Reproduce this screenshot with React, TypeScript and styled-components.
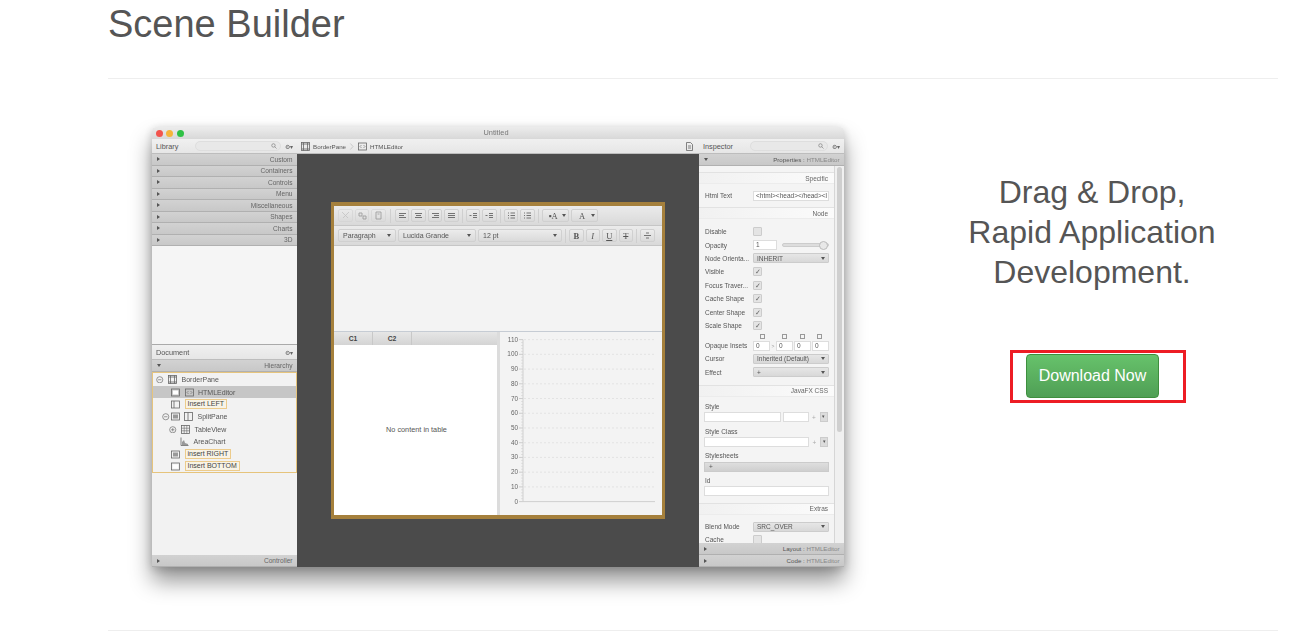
import React from 'react'
import styled, { createGlobalStyle } from 'styled-components'

const Global = createGlobalStyle`
  html, body { margin: 0; padding: 0; background: #fff; overflow: hidden; }
  body { font-family: "Liberation Sans", Arial, sans-serif; color: #555; }
`

const Page = styled.div`
  width: 1170px;
  height: 640px;
  margin-left: 108px;
  padding-top: 4px;
  box-sizing: border-box;
`
const Title = styled.h1`
  margin: 0;
  height: 74px;
  font-size: 38px;
  line-height: 40px;
  font-weight: 400;
  color: #555;
`
const Rule = styled.hr`
  margin: 0;
  border: 0;
  border-top: 1px solid #eee;
`
const Content = styled.div`
  display: flex;
  height: 551px;
`
const Shot = styled.div`
  width: 692px;
  height: 440px;
  margin: 48px 0 0 44px;
  flex: none;
  display: flex;
  flex-direction: column;
  border-radius: 4px 4px 0 0;
  box-shadow: 0 14px 22px rgba(0, 0, 0, 0.42), 0 2px 10px rgba(0, 0, 0, 0.18);
  font-size: 6.5px;
  color: #555;
  filter: blur(0.45px);
`
const TitleBar = styled.div`
  height: 12px;
  flex: none;
  display: flex;
  align-items: center;
  padding-left: 3.5px;
  gap: 3.5px;
  border-radius: 4px 4px 0 0;
  background: linear-gradient(#ececec, #d8d8d8);
`
const TitleText = styled.span`
  flex: 1;
  text-align: center;
  padding: 0 39px 1px 0;
  color: #777;
  font-size: 7.4px;
`
const Dot = styled.i<{ $c: string }>`
  width: 7px;
  height: 7px;
  border-radius: 50%;
  background: ${(p) => p.$c};
`
const Panes = styled.div`
  flex: 1;
  display: flex;
  min-height: 0;
`
const Side = styled.div<{ $w: number }>`
  width: ${(p) => p.$w}px;
  flex: none;
  display: flex;
  flex-direction: column;
  background: #f2f2f2;
  position: relative;
  overflow: hidden;
`
const Head = styled.div`
  height: 15px;
  flex: none;
  display: flex;
  align-items: center;
  padding: 0 4px;
  gap: 4px;
  box-sizing: border-box;
  background: linear-gradient(#f0f0f0, #e6e6e6);
  border-bottom: 1px solid #bdbdbd;
  font-size: 7.3px;
`
const Search = styled.div`
  flex: 1;
  height: 10px;
  margin-left: 13px;
  box-sizing: border-box;
  border-radius: 5px;
  background: #e8e8e8;
  border: 1px solid #dedede;
  display: flex;
  align-items: center;
  justify-content: flex-end;
  padding-right: 3px;
`
const Gear = styled.span`
  font-size: 6px;
  color: #666;
  white-space: nowrap;
`
const Fold = styled.div<{ $h?: number }>`
  height: ${(p) => p.$h ?? 11.5}px;
  flex: none;
  box-sizing: border-box;
  display: flex;
  align-items: center;
  justify-content: space-between;
  padding: 0 4.5px 0 5px;
  background: linear-gradient(#d2d2d2, #c8c8c8);
  border-bottom: 1px solid #b0b0b0;
  color: #666;
  font-size: 6.6px;
`
const Arrow = styled.span<{ $down?: boolean }>`
  width: 0;
  height: 0;
  ${(p) =>
    p.$down
      ? 'border-left: 2px solid transparent; border-right: 2px solid transparent; border-top: 3px solid #555;'
      : 'border-top: 2px solid transparent; border-bottom: 2px solid transparent; border-left: 3px solid #555;'}
`
const LibraryGap = styled.div`
  height: 98px;
  flex: none;
  background: #f5f5f5;
  border-bottom: 1px solid #aaa;
`
const Tree = styled.div`
  height: 100.5px;
  flex: none;
  box-sizing: border-box;
  border: 1px solid #e6c47c;
  padding-top: 0.5px;
  display: flex;
  flex-direction: column;
`
const TreeRow = styled.div<{ $indent: number; $sel?: boolean }>`
  height: 12.4px;
  flex: none;
  display: flex;
  align-items: center;
  gap: 4.5px;
  padding-left: ${(p) => p.$indent}px;
  background: ${(p) => (p.$sel ? '#c6c6c6' : 'transparent')};
  font-size: 7px;
  color: #555;
`
const Pair = styled.span`
  display: flex;
  align-items: center;
  gap: 1px;
`
const Insert = styled.span`
  border: 1px solid #eccb8b;
  background: #f8f3e6;
  padding: 0 2px;
  line-height: 8px;
  color: #444;
`
const Spacer = styled.div`
  flex: 1;
`
const Middle = styled.div`
  flex: 1;
  display: flex;
  flex-direction: column;
  min-width: 0;
`
const Crumbs = styled(Head)`
  gap: 3px;
  padding-right: 5px;
  font-size: 6.2px;
`
const Canvas = styled.div`
  flex: 1;
  display: flex;
  align-items: center;
  justify-content: center;
  background: #4b4b4b;
`
const Editor = styled.div`
  width: 334px;
  height: 317px;
  box-sizing: border-box;
  border: solid #a5803c;
  border-width: 4px 3px;
  display: flex;
  flex-direction: column;
  background: #f3f3f3;
`
const Tools = styled.div`
  height: 20px;
  flex: none;
  box-sizing: border-box;
  display: flex;
  align-items: center;
  gap: 2px;
  padding-left: 4px;
  background: linear-gradient(#ebebeb, #d9d9d9);
  border-bottom: 1px solid #c6c6c6;
`
const ToolBtn = styled.div<{ $w?: number; $off?: boolean }>`
  width: ${(p) => p.$w ?? 14.5}px;
  height: 13px;
  flex: none;
  box-sizing: border-box;
  border-radius: 2px;
  border: 1px solid #d0d0d0;
  background: linear-gradient(#ececec, #dadada);
  display: flex;
  align-items: center;
  justify-content: space-between;
  padding: 0 2px;
  color: #555;
  font: 8.5px "Liberation Serif", serif;
  opacity: ${(p) => (p.$off ? 0.55 : 1)};
`
const ToolGlyph = styled.span`
  flex: 1;
  text-align: center;
`
const Sep = styled.i<{ $m?: number }>`
  width: 1px;
  height: 14px;
  margin: 0 ${(p) => p.$m ?? 1}px;
  background: #cfcfcf;
  flex: none;
`
const ToolSelect = styled(ToolBtn)`
  font: 7px "Liberation Sans", sans-serif;
  padding: 0 4px;
`
const EditorBody = styled.div`
  height: 85px;
  flex: none;
  border-bottom: 1px solid #c6ccd4;
`
const Split = styled.div`
  flex: 1;
  display: flex;
  min-height: 0;
`
const TablePane = styled.div`
  width: 163px;
  flex: none;
  display: flex;
  flex-direction: column;
  background: #fff;
  border-right: 3px solid #dcdcdc;
`
const TableHead = styled.div`
  height: 13px;
  flex: none;
  display: flex;
  background: linear-gradient(#e6e6e6, #d4d4d4);
`
const TableCol = styled.div<{ $w: number }>`
  width: ${(p) => p.$w}px;
  box-sizing: border-box;
  border-right: 1px solid #c8c8c8;
  text-align: center;
  line-height: 13px;
  font-weight: 700;
  font-size: 6.8px;
  color: #444;
`
const TableEmpty = styled.div`
  flex: 1;
  display: flex;
  align-items: center;
  justify-content: center;
  color: #555;
  font-size: 7.3px;
  padding: 0 0 1px 2px;
`
const ChartPane = styled.div`
  flex: 1;
  min-width: 0;
  display: flex;
`
const Inspector = styled.div`
  flex: 1;
  display: flex;
  min-height: 0;
`
const Props = styled.div`
  width: 135px;
  flex: none;
  display: flex;
  flex-direction: column;
  background: #f4f4f4;
  overflow: hidden;
`
const Track = styled.div`
  flex: 1;
  background: #f0f0f0;
  border-left: 1px solid #d6d6d6;
  padding: 1px 1.5px;
`
const Thumb = styled.div`
  width: 5px;
  height: 265px;
  border-radius: 3px;
  background: #cfcfcf;
`
const Band = styled.div<{ $h: number; $mt?: number }>`
  height: ${(p) => p.$h}px;
  margin-top: ${(p) => p.$mt ?? 0}px;
  flex: none;
  background: linear-gradient(90deg, #f1f1f1, #fbfbfb);
  border-top: 1px solid #e2e2e2;
  border-bottom: 1px solid #ececec;
  box-sizing: border-box;
  display: flex;
  align-items: center;
  justify-content: flex-end;
  padding-right: 6px;
  color: #666;
`
const Prop = styled.div<{ $h?: number; $mt?: number }>`
  height: ${(p) => p.$h ?? 13.4}px;
  margin-top: ${(p) => p.$mt ?? 0}px;
  flex: none;
  display: grid;
  grid-template-columns: 48px 76px;
  align-items: center;
  padding-left: 6px;
  color: #555;
  white-space: nowrap;
`
const Label = styled.div<{ $h?: number; $mt?: number }>`
  height: ${(p) => p.$h ?? 10}px;
  margin-top: ${(p) => p.$mt ?? 0}px;
  flex: none;
  padding-left: 6px;
  display: flex;
  align-items: center;
`
const Check = styled.div`
  width: 9px;
  height: 9px;
  box-sizing: border-box;
  border: 1px solid #ccc;
  background: #e4e4e4;
  border-radius: 1px;
  color: #666;
  font-size: 6.5px;
  line-height: 7px;
  text-align: center;
`
const Input = styled.div<{ $w?: number }>`
  width: ${(p) => (p.$w ? `${p.$w}px` : '100%')};
  height: 10px;
  box-sizing: border-box;
  flex: none;
  background: #fff;
  border: 1px solid #ddd;
  padding: 0 2px;
  line-height: 8px;
  overflow: hidden;
  white-space: nowrap;
`
const Combo = styled.div<{ $w?: number }>`
  width: ${(p) => (p.$w ? `${p.$w}px` : '100%')};
  height: 10px;
  box-sizing: border-box;
  background: linear-gradient(#e6e6e6, #d8d8d8);
  border: 1px solid #ccc;
  border-radius: 1px;
  padding: 0 3px;
  display: flex;
  align-items: center;
  justify-content: space-between;
`
const Fields = styled.div`
  display: flex;
  gap: 1px;
  align-items: center;
`
const LinkMark = styled.span`
  width: 4px;
  flex: none;
  text-align: center;
  font-size: 5px;
  color: #999;
`
const Slider = styled.div`
  flex: 1;
  height: 2px;
  margin-left: 4px;
  background: #ddd;
  border: 1px solid #ccc;
  border-radius: 2px;
  display: flex;
  justify-content: flex-end;
  align-items: center;
`
const Knob = styled.i`
  width: 7px;
  height: 7px;
  flex: none;
  border-radius: 50%;
  background: #e8e8e8;
  border: 1px solid #bbb;
`
const FullRow = styled.div<{ $h?: number }>`
  height: ${(p) => p.$h ?? 12}px;
  flex: none;
  display: flex;
  gap: 1.5px;
  align-items: center;
  padding: 0 5px;
`
const Mini = styled.div`
  width: 8px;
  height: 10px;
  flex: none;
  box-sizing: border-box;
  background: #dcdcdc;
  border: 1px solid #ccc;
  text-align: center;
  line-height: 7px;
  font-size: 5px;
`
const Plus = styled.span`
  width: 8px;
  flex: none;
  text-align: center;
  color: #aaa;
`
const Bar = styled.div`
  height: 10px;
  flex: 1;
  box-sizing: border-box;
  padding-left: 4px;
  line-height: 8px;
  background: linear-gradient(#dedede, #cfcfcf);
  border: 1px solid #cbcbcb;
`
const InsetMarks = styled.div`
  height: 7px;
  flex: none;
  display: grid;
  grid-template-columns: 22px 18px 17px 17px;
  padding-left: 54px;
`
const InsetMark = styled.i`
  width: 3px;
  height: 3px;
  margin-left: 7px;
  margin-top: 2px;
  border: 0.5px solid #999;
`
const BottomBars = styled.div`
  position: absolute;
  left: 0;
  right: 0;
  bottom: 0;
`
const BarName = styled.span`
  font-weight: 400;
  font-size: 6.2px;
  color: #555;
  & > em {
    font-style: normal;
    color: #888;
  }
`
const Side2 = styled.div`
  flex: 1;
  display: flex;
  flex-direction: column;
  margin-left: 62px;
  padding-top: 93px;
`
const Pitch = styled.div`
  font-size: 32px;
  line-height: 40px;
  text-align: center;
  color: #555;
`
const Marked = styled.div`
  align-self: flex-start;
  margin: 58px 0 0 104px;
  border: 3px solid #ed1c24;
  padding: 1px 24px 2px 13px;
`
const Download = styled.button`
  display: block;
  width: 133px;
  height: 44px;
  padding: 0;
  font: 16px "Liberation Sans", Arial, sans-serif;
  color: #fff;
  border: 1px solid #3e8f3e;
  border-radius: 4px;
  background: linear-gradient(#67c26b, #4f9f55);
`

const Svg: React.FC<{ w?: number; h?: number; children: React.ReactNode }> = ({ w = 9, h = 9, children }) => (
  <svg width={w} height={h} viewBox="0 0 9 9" fill="none" stroke="#666" strokeWidth="0.8" style={{ flex: 'none' }}>
    {children}
  </svg>
)
const PaneIcon = () => (
  <Svg>
    <rect x="0.5" y="0.5" width="8" height="8" />
    <path d="M2.5 .5v8M6.5 .5v8M.5 2h8M.5 7h8" />
  </Svg>
)
const BoxIcon: React.FC<{ fill?: boolean }> = ({ fill }) => (
  <Svg>
    <rect x="0.5" y="1" width="8" height="7" />
    <rect x="2" y="2.5" width="5" height="4" fill={fill ? '#999' : '#fff'} stroke="none" />
  </Svg>
)
const LeftIcon = () => (
  <Svg>
    <rect x="0.5" y="1" width="8" height="7" />
    <path d="M3 1v7" />
  </Svg>
)
const HtmlIcon = () => (
  <Svg>
    <rect x="0.5" y="1" width="8" height="7" />
    <path d="M3.5 3 2 4.5 3.5 6M5.5 3 7 4.5 5.5 6" strokeWidth="0.6" />
  </Svg>
)
const SplitIcon = () => (
  <Svg>
    <rect x="0.5" y="0.5" width="8" height="8" />
    <path d="M4 .5v8" />
  </Svg>
)
const TableIcon = () => (
  <Svg>
    <rect x="0.5" y="0.5" width="8" height="8" />
    <path d="M3.2 .5v8M5.8 .5v8M.5 3.2h8M.5 5.8h8" strokeWidth="0.6" />
  </Svg>
)
const AreaIcon = () => (
  <Svg>
    <path d="M1 .5V8.5H8.5" />
    <path d="M2 8V5l2-2 1 3 3 1v1z" fill="#999" stroke="none" />
  </Svg>
)
const Toggle: React.FC<{ plus?: boolean }> = ({ plus }) => (
  <Svg w={7.5} h={7.5}>
    <circle cx="4.5" cy="4.5" r="3.7" />
    <path d={plus ? 'M2.5 4.5h4M4.5 2.5v4' : 'M2.5 4.5h4'} />
  </Svg>
)
const Lens = () => (
  <Svg w={6} h={6}>
    <circle cx="3.7" cy="3.7" r="2.6" />
    <path d="M5.6 5.6 8.3 8.3" />
  </Svg>
)
const Chevron = () => (
  <Svg w={6} h={13}>
    <path d="M2 0 6 4.5 2 9" stroke="#aaa" />
  </Svg>
)
const Caret = () => <Arrow $down />
const Scissors = () => (
  <Svg>
    <path d="M1 1l6 6M8 1 2 7" stroke="#aaa" />
  </Svg>
)
const Lines: React.FC<{ d: string }> = ({ d }) => (
  <Svg>
    <path d={d} strokeWidth="0.9" />
  </Svg>
)

const chartLabels = [110, 100, 90, 80, 70, 60, 50, 40, 30, 20, 10, 0]
const Chart = () => (
  <svg width="162" height="181" viewBox="0 0 162 181" style={{ display: 'block' }}>
    {chartLabels.map((n, i) => {
      const y = 7.6 + i * 14.73
      return (
        <g key={n}>
          <text x="18" y={y + 2} textAnchor="end" fontSize="6.4" fill="#666" fontFamily="Liberation Sans">
            {n}
          </text>
          <path d={`M19 ${y}h4`} stroke="#bbb" strokeWidth="0.7" />
          {n > 0 && <path d={`M24 ${y}H154`} stroke="#ddd" strokeWidth="0.7" strokeDasharray="2 2" />}
          {n > 0 &&
            [1, 2, 3, 4].map((k) => (
              <path key={k} d={`M21 ${y + k * 2.95}h2`} stroke="#ccc" strokeWidth="0.5" />
            ))}
        </g>
      )
    })}
    <path d="M23 7.6V169.6H155" stroke="#ccc" strokeWidth="0.9" fill="none" />
  </svg>
)

const library = ['Custom', 'Containers', 'Controls', 'Menu', 'Miscellaneous', 'Shapes', 'Charts', '3D']
const checks = ['Visible', 'Focus Traver...', 'Cache Shape', 'Center Shape', 'Scale Shape']

const App = () => (
  <Page>
    <Global />
    <Title>Scene Builder</Title>
    <Rule />
    <Content>
      <Shot>
        <TitleBar>
          <Dot $c="#f2544d" />
          <Dot $c="#f6b53a" />
          <Dot $c="#2fc145" />
          <TitleText>Untitled</TitleText>
        </TitleBar>
        <Panes>
          <Side $w={145}>
            <Head>
              Library
              <Search>
                <Lens />
              </Search>
              <Gear>⚙▾</Gear>
            </Head>
            {library.map((name) => (
              <Fold key={name}>
                <Arrow />
                {name}
              </Fold>
            ))}
            <LibraryGap />
            <Head>
              Document
              <Spacer />
              <Gear>⚙▾</Gear>
            </Head>
            <Fold $h={12}>
              <Arrow $down />
              Hierarchy
            </Fold>
            <Tree>
              <TreeRow $indent={3}>
                <Toggle />
                <PaneIcon />
                BorderPane
              </TreeRow>
              <TreeRow $indent={18} $sel>
                <BoxIcon />
                <HtmlIcon />
                HTMLEditor
              </TreeRow>
              <TreeRow $indent={18}>
                <LeftIcon />
                <Insert>Insert LEFT</Insert>
              </TreeRow>
              <TreeRow $indent={9}>
                <Pair>
                  <Toggle />
                  <BoxIcon fill />
                </Pair>
                <SplitIcon />
                SplitPane
              </TreeRow>
              <TreeRow $indent={16}>
                <Toggle plus />
                <TableIcon />
                TableView
              </TreeRow>
              <TreeRow $indent={27}>
                <AreaIcon />
                AreaChart
              </TreeRow>
              <TreeRow $indent={18}>
                <BoxIcon fill />
                <Insert>insert RIGHT</Insert>
              </TreeRow>
              <TreeRow $indent={18}>
                <BoxIcon />
                <Insert>Insert BOTTOM</Insert>
              </TreeRow>
            </Tree>
            <Spacer />
            <Fold $h={12}>
              <Arrow />
              Controller
            </Fold>
          </Side>
          <Middle>
            <Crumbs>
              <PaneIcon />
              BorderPane
              <Chevron />
              <HtmlIcon />
              HTMLEditor
              <Spacer />
              <Svg>
                <path d="M1.5.5h4l2 2v6h-6zM3 4h3M3 6h3" />
              </Svg>
            </Crumbs>
            <Canvas>
              <Editor>
                <Tools>
                  <ToolBtn $off><Scissors /></ToolBtn>
                  <ToolBtn $off><Lines d="M1 2h3v3H1zM5 5h3v3H5z" /></ToolBtn>
                  <ToolBtn $off><Lines d="M2 1h5v7H2zM3.5 3h2" /></ToolBtn>
                  <Sep $m={2} />
                  <ToolBtn><Lines d="M1 2.5h7M1 4.5h5M1 6.5h7" /></ToolBtn>
                  <ToolBtn><Lines d="M1 2.5h7M2 4.5h5M1 6.5h7" /></ToolBtn>
                  <ToolBtn><Lines d="M1 2.5h7M3 4.5h5M1 6.5h7" /></ToolBtn>
                  <ToolBtn><Lines d="M1 2.5h7M1 4.5h7M1 6.5h7" /></ToolBtn>
                  <Sep />
                  <ToolBtn><Lines d="M4 2.5h4M4 4.5h4M4 6.5h4M.5 4.5h2" /></ToolBtn>
                  <ToolBtn><Lines d="M4 2.5h4M4 4.5h4M4 6.5h4M.5 4.5h2" /></ToolBtn>
                  <Sep />
                  <ToolBtn><Lines d="M1 2h1M1 4.5h1M1 7h1M3.5 2H8M3.5 4.5H8M3.5 7H8" /></ToolBtn>
                  <ToolBtn><Lines d="M1 2h1M1 4.5h1M1 7h1M3.5 2H8M3.5 4.5H8M3.5 7H8" /></ToolBtn>
                  <Sep />
                  <ToolBtn $w={27}><ToolGlyph>▪A</ToolGlyph><Caret /></ToolBtn>
                  <ToolBtn $w={27}><ToolGlyph>A</ToolGlyph><Caret /></ToolBtn>
                </Tools>
                <Tools>
                  <ToolSelect $w={58}>Paragraph<Caret /></ToolSelect>
                  <ToolSelect $w={78}>Lucida Grande<Caret /></ToolSelect>
                  <ToolSelect $w={84}>12 pt<Caret /></ToolSelect>
                  <Sep />
                  <ToolBtn><ToolGlyph><b>B</b></ToolGlyph></ToolBtn>
                  <ToolBtn><ToolGlyph><i>I</i></ToolGlyph></ToolBtn>
                  <ToolBtn><ToolGlyph><u>U</u></ToolGlyph></ToolBtn>
                  <ToolBtn><ToolGlyph><s>T</s></ToolGlyph></ToolBtn>
                  <Sep />
                  <ToolBtn><Lines d="M1 4.5h7M3 2h3M3 7h3" /></ToolBtn>
                </Tools>
                <EditorBody />
                <Split>
                  <TablePane>
                    <TableHead>
                      <TableCol $w={39}>C1</TableCol>
                      <TableCol $w={39}>C2</TableCol>
                    </TableHead>
                    <TableEmpty>No content in table</TableEmpty>
                  </TablePane>
                  <ChartPane>
                    <Chart />
                  </ChartPane>
                </Split>
              </Editor>
            </Canvas>
          </Middle>
          <Side $w={145}>
            <Head>
              Inspector
              <Search>
                <Lens />
              </Search>
              <Gear>⚙▾</Gear>
            </Head>
            <Fold $h={12}>
              <Arrow $down />
              <BarName>Properties : <em>HTMLEditor</em></BarName>
            </Fold>
            <Inspector>
              <Props>
                <Band $h={12} $mt={6}>Specific</Band>
                <Prop $mt={6} $h={11}>
                  Html Text
                  <Input>&lt;html&gt;&lt;head&gt;&lt;/head&gt;&lt;l</Input>
                </Prop>
                <Band $h={12} $mt={6}>Node</Band>
                <Prop $mt={6}>
                  Disable
                  <Check />
                </Prop>
                <Prop>
                  Opacity
                  <Fields>
                    <Input $w={24}>1</Input>
                    <Slider><Knob /></Slider>
                  </Fields>
                </Prop>
                <Prop>
                  Node Orienta...
                  <Combo>INHERIT<Caret /></Combo>
                </Prop>
                {checks.map((name) => (
                  <Prop key={name}>
                    {name}
                    <Check>✓</Check>
                  </Prop>
                ))}
                <InsetMarks>
                  <InsetMark />
                  <InsetMark />
                  <InsetMark />
                  <InsetMark />
                </InsetMarks>
                <Prop $h={13}>
                  Opaque Insets
                  <Fields>
                    <Input $w={17}>0</Input>
                    <LinkMark>&gt;</LinkMark>
                    <Input $w={17}>0</Input>
                    <Input $w={17}>0</Input>
                    <Input $w={17}>0</Input>
                  </Fields>
                </Prop>
                <Prop>
                  Cursor
                  <Combo>Inherited (Default)<Caret /></Combo>
                </Prop>
                <Prop>
                  Effect
                  <Combo>+<Caret /></Combo>
                </Prop>
                <Band $h={12} $mt={6}>JavaFX CSS</Band>
                <Label $mt={4.5}>Style</Label>
                <FullRow>
                  <Input $w={77} />
                  <Input $w={26} />
                  <Plus>+</Plus>
                  <Mini>▾</Mini>
                </FullRow>
                <Label $mt={3}>Style Class</Label>
                <FullRow>
                  <Input $w={105} />
                  <Plus>+</Plus>
                  <Mini>▾</Mini>
                </FullRow>
                <Label $mt={2.5}>Stylesheets</Label>
                <FullRow>
                  <Bar>+</Bar>
                </FullRow>
                <Label $mt={3}>Id</Label>
                <FullRow $h={11}>
                  <Input />
                </FullRow>
                <Band $h={12} $mt={6}>Extras</Band>
                <Prop $mt={5}>
                  Blend Mode
                  <Combo>SRC_OVER<Caret /></Combo>
                </Prop>
                <Prop>
                  Cache
                  <Check />
                </Prop>
              </Props>
              <Track>
                <Thumb />
              </Track>
            </Inspector>
            <BottomBars>
              <Fold $h={12}>
                <Arrow />
                <BarName>Layout : <em>HTMLEditor</em></BarName>
              </Fold>
              <Fold $h={12}>
                <Arrow />
                <BarName>Code : <em>HTMLEditor</em></BarName>
              </Fold>
            </BottomBars>
          </Side>
        </Panes>
      </Shot>
      <Side2>
        <Pitch>
          Drag &amp; Drop,
          <br />
          Rapid Application
          <br />
          Development.
        </Pitch>
        <Marked>
          <Download>Download Now</Download>
        </Marked>
      </Side2>
    </Content>
    <Rule />
  </Page>
)

export default App
